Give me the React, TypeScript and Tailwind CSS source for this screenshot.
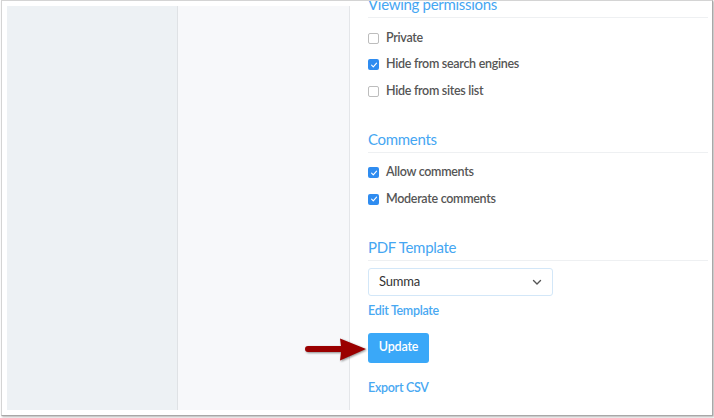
const font = { fontFamily: 'Lato, "Open Sans", sans-serif' };

function Checkbox({ label, checked }: { label: string; checked?: boolean }) {
  return (
    <label className="flex h-[26.5px] items-center gap-[7px]">
      {checked ? (
        <span className="flex h-[11px] w-[11px] items-center justify-center rounded-[2px] bg-[#2f8cf0]">
          <svg viewBox="0 0 10 10" className="h-[8px] w-[8px]" fill="none">
            <path d="M2 5.2 L4.1 7.3 L8.2 2.6" stroke="white" strokeWidth="1.4" strokeLinecap="round" strokeLinejoin="round" />
          </svg>
        </span>
      ) : (
        <span className="h-[11px] w-[11px] rounded-[2px] border border-[#bdbdbd] bg-white" />
      )}
      <span className="text-[12.5px] font-semibold tracking-[-0.3px] text-[#555]">{label}</span>
    </label>
  );
}

function Heading({ children, first }: { children: string; first?: boolean }) {
  return (
    <div className={`${first ? 'mt-[-7px]' : ''} border-b border-[#eef0f2] pb-[3px]`}>
      <h3 className="text-[15px] leading-[20px] tracking-[-0.3px] text-[#45a6f2]">{children}</h3>
    </div>
  );
}

function ArrowPointer() {
  return (
    <svg
      className="absolute left-[300px] top-[334px]"
      width="72"
      height="32"
      viewBox="0 0 72 32"
      style={{ filter: 'drop-shadow(1px 1.5px 1px rgba(0,0,0,0.45))' }}
    >
      <path d="M8 12 L41 12 L40 4.5 L66 15 L40 26.5 L41 18 L8 18 A3 3 0 0 1 8 12 Z" fill="#9a0000" />
    </svg>
  );
}

export default function App() {
  return (
    <div className="relative h-[418px] w-[714px] overflow-hidden bg-white" style={font}>
      <div className="ml-[1px] h-[416px] w-[712px] border-b border-l border-r border-t border-b-[#a8a8a8] border-l-[#d4d4d4] border-r-[#a8a8a8] border-t-[#d4d4d4] shadow-[1px_1px_2px_rgba(0,0,0,0.3)]">
        <div className="flex h-full">
          <div className="flex py-[5px] pl-[5px]">
            <div className="w-[170px] bg-[#edf1f4]" />
            <div className="w-[1px] bg-[#dfe2e5] shadow-[1px_0_1px_rgba(0,0,0,0.04)]" />
            <div className="w-[171px] bg-[#f7f8fa]" />
            <div className="w-[1px] bg-[#e4e6e9]" />
          </div>
          <div className="flex-1 overflow-hidden pl-[18px] pr-[4px]">
            <section className="mb-[24px]">
              <Heading first>Viewing permissions</Heading>
              <div className="pt-[7px]">
                <Checkbox label="Private" />
                <Checkbox label="Hide from search engines" checked />
                <Checkbox label="Hide from sites list" />
              </div>
            </section>
            <section className="mb-[24px]">
              <Heading>Comments</Heading>
              <div className="pt-[7px]">
                <Checkbox label="Allow comments" checked />
                <Checkbox label="Moderate comments" checked />
              </div>
            </section>
            <section>
              <Heading>PDF Template</Heading>
              <div className="mt-[7px] flex h-[28px] w-[185px] items-center justify-between rounded-[3px] border border-[#d3e7f8] bg-white pl-[10px] pr-[9px]">
                <span className="text-[13px] tracking-[-0.2px] text-[#333]">Summa</span>
                <svg viewBox="0 0 12 12" className="h-[12px] w-[12px]" fill="none">
                  <path d="M2.5 4.5 L6 8 L9.5 4.5" stroke="#555" strokeWidth="1.4" strokeLinecap="round" strokeLinejoin="round" />
                </svg>
              </div>
              <a className="mt-[5px] block text-[12.5px] leading-[20px] font-semibold tracking-[-0.3px] text-[#48a8f2]">Edit Template</a>
              <button
                type="button"
                className="mt-[12px] flex h-[30px] w-[61px] items-center justify-center rounded-[3px] bg-[#3aa8f8] text-[12.5px] font-semibold tracking-[-0.2px] text-white"
              >
                Update
              </button>
              <a className="mt-[15px] block text-[12.5px] leading-[20px] font-semibold tracking-[-0.3px] text-[#48a8f2]">Export CSV</a>
            </section>
          </div>
        </div>
      </div>
      <ArrowPointer />
    </div>
  );
}
